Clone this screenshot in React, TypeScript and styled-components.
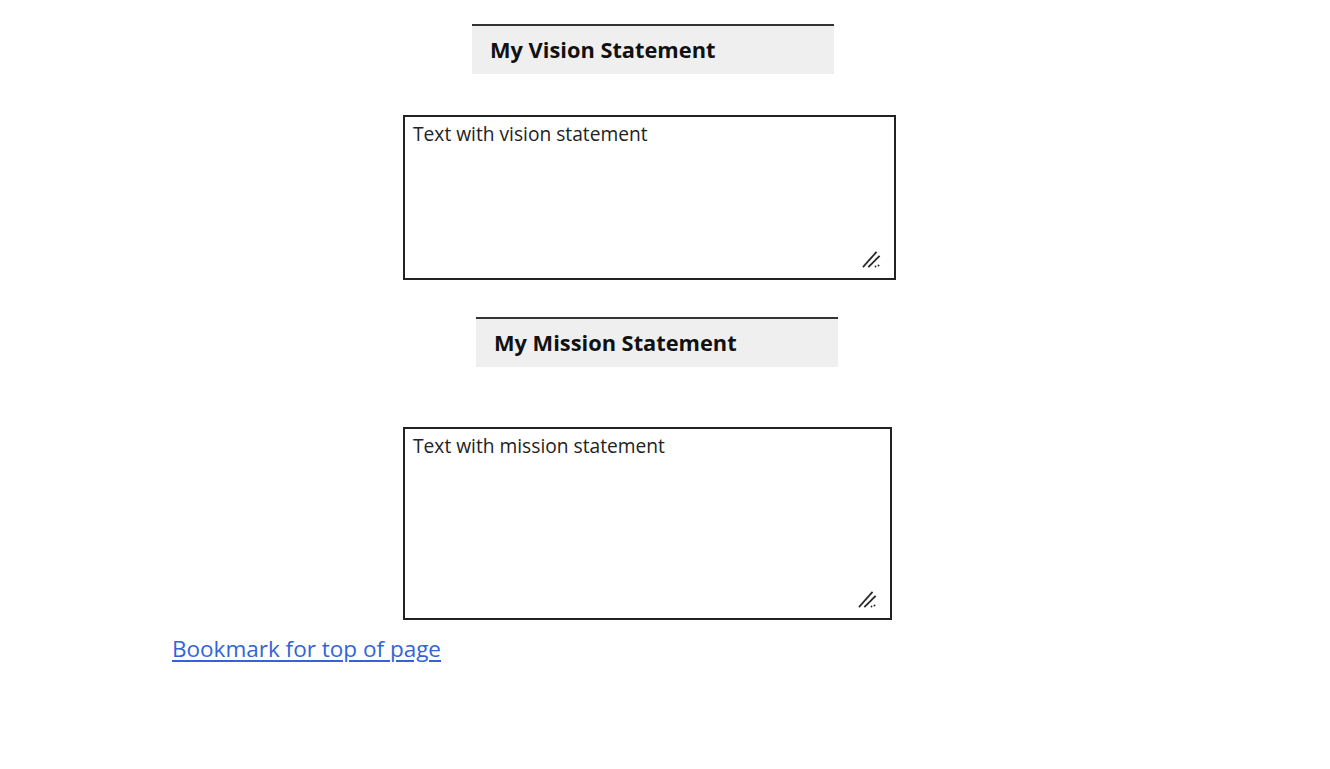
import React from 'react';
import styled, { createGlobalStyle } from 'styled-components';

const GlobalStyle = createGlobalStyle`
  body {
    margin: 0;
    background: #ffffff;
    font-family: 'Open Sans', 'Noto Sans', Arial, sans-serif;
    color: #111;
  }

  *, *:before, *:after {
    box-sizing: border-box;
  }
`;

const Page = styled.main`
  padding: 24px 0 0 172px;
`;

const Column = styled.div`
  margin-left: 231px;
  display: flex;
  flex-direction: column;
  align-items: flex-start;
`;

const SectionHeading = styled.h2<{ $offset: number; $gap: number }>`
  margin: ${p => p.$gap}px 0 0 ${p => p.$offset}px;
  width: 362px;
  height: 50px;
  display: flex;
  align-items: center;
  padding: 0 0 2px 18px;
  border-top: 2px solid #333;
  background: #efefef;
  font-size: 21.8px;
  font-weight: 700;
  color: #111;
`;

const Field = styled.div<{ $w: number; $h: number; $gap: number }>`
  position: relative;
  margin-top: ${p => p.$gap}px;
  width: ${p => p.$w}px;
  height: ${p => p.$h}px;
`;

const Statement = styled.textarea`
  display: block;
  width: 100%;
  height: 100%;
  border: 2px solid #222;
  border-radius: 0;
  padding: 3px 8px;
  margin: 0;
  font-family: 'Open Sans', 'Noto Sans', Arial, sans-serif;
  font-size: 19.2px;
  color: #222;
  resize: none;
  outline: none;
  background: #fff;
`;

const Grip = styled.svg`
  position: absolute;
  right: 15px;
  bottom: 12px;
  width: 19px;
  height: 17px;
  pointer-events: none;
`;

const TopLink = styled.a`
  display: inline-block;
  margin-top: 13px;
  font-size: 22.5px;
  color: #3164d8;
  text-decoration: underline;
  text-underline-offset: 3px;
`;

function ResizeGrip() {
  return (
    <Grip viewBox="0 0 19 17">
      <g stroke="#2a2a2a" strokeWidth="1.8" strokeLinecap="square" strokeDasharray="2.2 1.1">
        <line x1="1.5" y1="15.5" x2="14" y2="1.5" />
        <line x1="7" y1="15.5" x2="17" y2="5.5" />
      </g>
      <circle cx="16.5" cy="14.5" r="1" fill="#2a2a2a" />
      <circle cx="13.5" cy="15.5" r="0.9" fill="#2a2a2a" />
    </Grip>
  );
}

export default function App() {
  return (
    <>
      <GlobalStyle />
      <Page>
        <Column>
          <SectionHeading $offset={69} $gap={0}>My Vision Statement</SectionHeading>
          <Field $w={493} $h={165} $gap={41}>
            <Statement defaultValue="Text with vision statement" />
            <ResizeGrip />
          </Field>
          <SectionHeading $offset={73} $gap={37}>My Mission Statement</SectionHeading>
          <Field $w={489} $h={193} $gap={60}>
            <Statement defaultValue="Text with mission statement" />
            <ResizeGrip />
          </Field>
        </Column>
        <TopLink href="#top">Bookmark for top of page</TopLink>
      </Page>
    </>
  );
}
